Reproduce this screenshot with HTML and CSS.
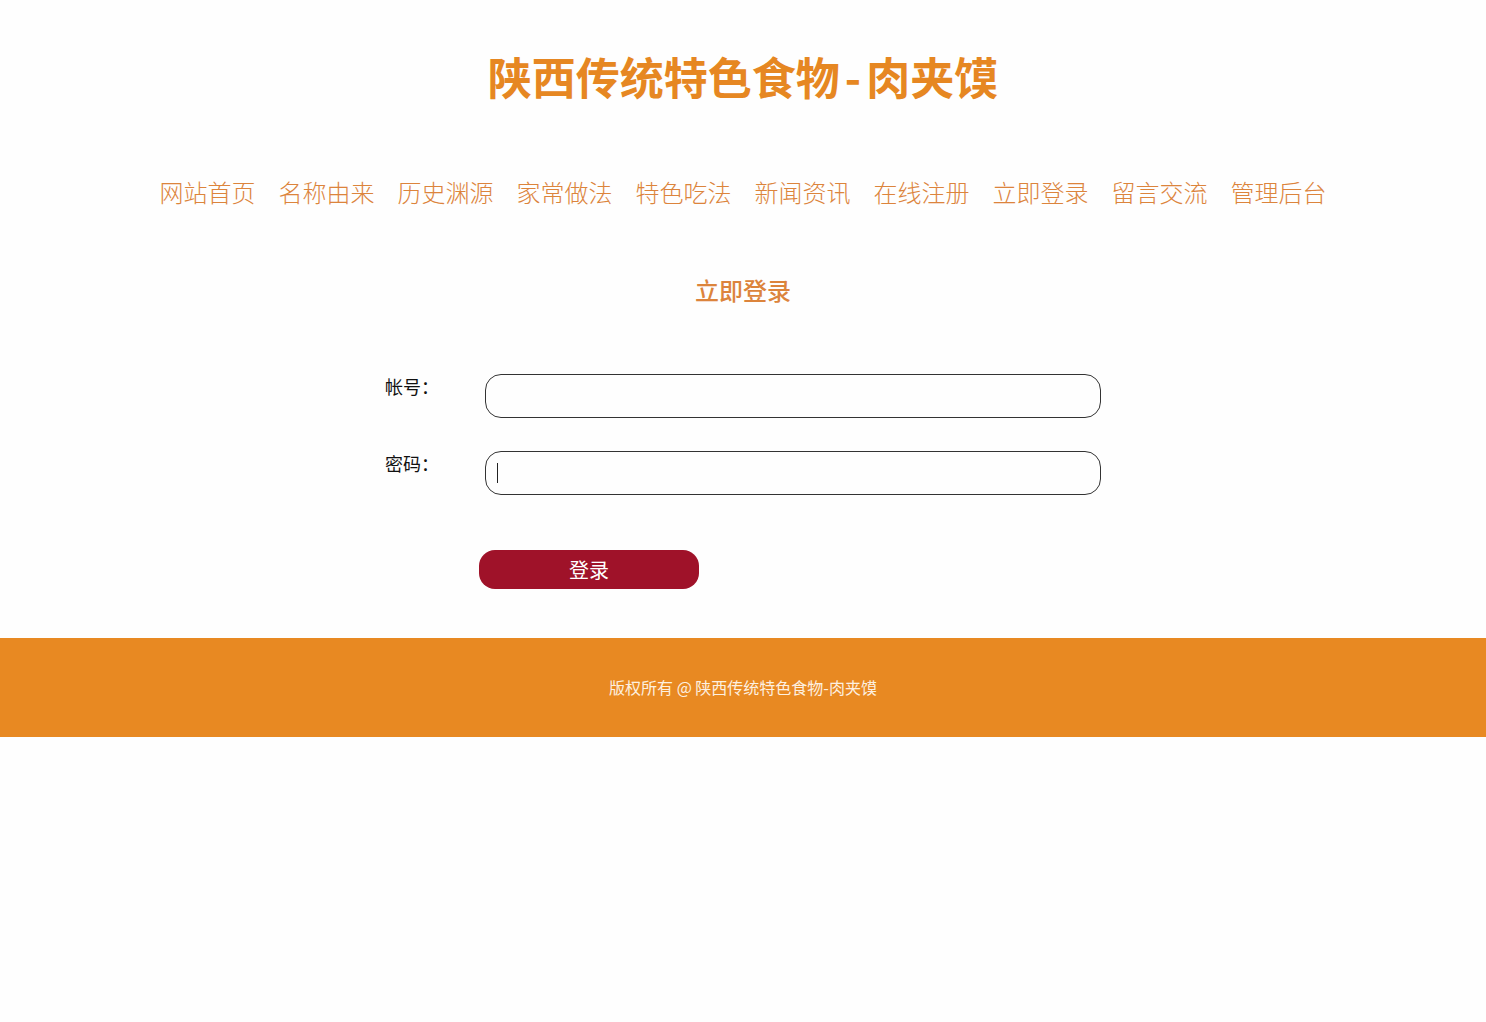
FILE: index.html
```html
<!DOCTYPE html>
<html lang="zh-CN">
<head>
<meta charset="utf-8">
<meta name="viewport" content="width=device-width, initial-scale=1">
<title>立即登录</title>
<link rel="stylesheet" href="styles.css">
</head>
<body>
<header class="header">
  <div class="logo">陕西传统特色食物<span class="dash">-</span>肉夹馍</div>
  <nav class="nav">
    <a href="#">网站首页</a>
    <a href="#">名称由来</a>
    <a href="#">历史渊源</a>
    <a href="#">家常做法</a>
    <a href="#">特色吃法</a>
    <a href="#">新闻资讯</a>
    <a href="#">在线注册</a>
    <a href="#">立即登录</a>
    <a href="#">留言交流</a>
    <a href="#">管理后台</a>
  </nav>
</header>
<main>
  <h1 class="title">立即登录</h1>
  <form class="login">
    <div class="row">
      <label for="account">帐号：</label>
      <div class="field"><input id="account" type="text"></div>
    </div>
    <div class="row">
      <label for="password">密码：</label>
      <div class="field"><input id="password" type="password"><span class="caret"></span></div>
    </div>
    <button class="submit" type="submit">登录</button>
  </form>
</main>
<footer class="footer">版权所有 @ 陕西传统特色食物-肉夹馍</footer>
</body>
</html>
```

FILE: styles.css
```css
* {
  box-sizing: border-box;
}

body {
  margin: 0;
  background: #fefefe;
  color: #111;
  font-family: "Noto Sans CJK SC", sans-serif;
}

.logo {
  padding: 44px 0 46px;
  color: #e68722;
  font-size: 44px;
  font-weight: 700;
  line-height: 64px;
  text-align: center;
}

.dash {
  padding: 0 5px;
}

.nav {
  display: flex;
  flex-wrap: wrap;
  justify-content: center;
  gap: 23px;
  padding: 18px 0;
}

.nav a,
.title {
  color: #dc843c;
  font-family: KaiTi, STKaiti, "Noto Sans CJK SC", sans-serif;
  font-size: 24px;
  line-height: 40px;
}

.nav a {
  font-weight: 300;
  text-decoration: none;
}

.title {
  margin: 40px 0 64px;
  font-weight: 500;
  text-align: center;
}

.login {
  display: flex;
  flex-direction: column;
  gap: 33px;
  width: 90%;
  max-width: 716px;
  margin: 0 auto;
}

.row {
  display: flex;
}

.row label {
  flex: 0 0 100px;
  font-size: 18px;
  line-height: 24px;
}

.field {
  position: relative;
  flex: 1;
}

.field input {
  display: block;
  width: 100%;
  height: 44px;
  padding: 0 11px;
  border: 1px solid #333;
  border-radius: 16px;
  outline: none;
  background: transparent;
  font: inherit;
}

.caret {
  position: absolute;
  top: 12px;
  left: 12px;
  width: 1px;
  height: 20px;
  background: #222;
}

.submit {
  width: 220px;
  height: 39px;
  margin: 22px 0 49px 94px;
  padding: 0;
  border: 0;
  border-radius: 16px;
  background: #9f1229;
  color: #fff;
  font-family: inherit;
  font-size: 20px;
  font-weight: 400;
  line-height: 39px;
}

.footer {
  padding: 38px 0;
  background: #e88922;
  color: #fdf0e0;
  font-size: 16px;
  line-height: 23px;
  text-align: center;
}
```
